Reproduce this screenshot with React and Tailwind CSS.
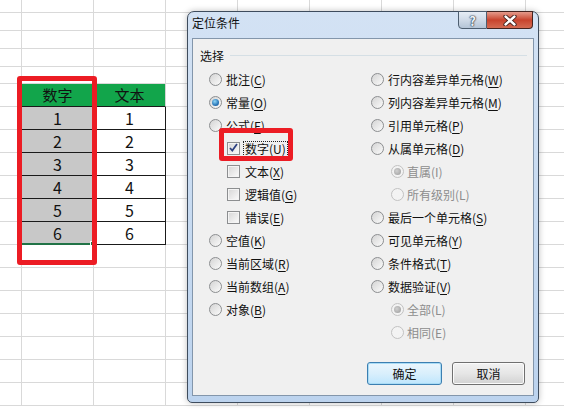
import React from "react";

const ROWS = [
  "h-[13px]", "h-[18px]", "h-[18px]", "h-[18px]", "h-[17px]",
  "h-[23px]", "h-[23px]", "h-[23px]", "h-[23px]", "h-[23px]", "h-[23px]", "h-[23px]",
  "h-[23px]", "h-[23px]", "h-[23px]", "h-[23px]", "h-[23px]", "h-[23px]", "h-[23px]",
];
const COLS = ["w-[22px]", "w-[72px]", "w-[72px]", "w-[72px]", "w-[72px]", "w-[72px]", "w-[72px]", "w-[72px]", "w-[72px]"];

function Cell({ r, c }) {
  const base = "shrink-0 border-r border-b flex items-center justify-center";
  if (r === 5 && c === 1)
    return <div className={`${COLS[c]} ${base} bg-[#12a54b] border-r-[#12a54b] border-b-[#1a1a1a] text-[15px] text-[#111]`}>数字</div>;
  if (r === 5 && c === 2)
    return <div className={`${COLS[c]} ${base} bg-[#12a54b] border-r-[#d4d4d4] border-b-[#1a1a1a] text-[15px] text-[#111]`}>文本</div>;
  if (r >= 6 && r <= 11 && c === 1)
    return <div className={`${COLS[c]} ${base} bg-[#c8c8c8] border-[#1a1a1a] text-[16px] text-[#111]`}>{r - 5}</div>;
  if (r >= 6 && r <= 11 && c === 2)
    return <div className={`${COLS[c]} ${base} bg-white border-[#1a1a1a] text-[16px] text-[#111]`}>{r - 5}</div>;
  return <div className={`${COLS[c]} ${base} border-[#d9d9d9]`} />;
}

function Radio({ checked, disabled }) {
  return (
    <span
      className={`flex h-[13px] w-[13px] shrink-0 items-center justify-center rounded-full border ${
        disabled ? "border-[#c2c2c2] bg-[#f3f3f3]" : "border-[#8c8e90] bg-gradient-to-br from-[#d4d4d4] to-[#fbfbfb]"
      }`}
    >
      {checked && (
        <span
          className={`h-[7px] w-[7px] rounded-full ${
            disabled
              ? "bg-[radial-gradient(circle_at_40%_40%,#d0d0d0,#9a9a9a)]"
              : "bg-[radial-gradient(circle_at_40%_35%,#8fd6f7,#2a77b8_60%,#1a4f86)]"
          }`}
        />
      )}
    </span>
  );
}

function Check({ checked }) {
  return (
    <span className="flex h-[13px] w-[13px] shrink-0 items-center justify-center border border-[#8c8e90] bg-[#f4f4f4]">
      <span className="relative h-[9px] w-[9px] bg-gradient-to-br from-[#d9d9d9] to-[#f8f8f8]">
        {checked && (
          <svg className="absolute left-[-1px] top-[-2px]" width="11" height="11" viewBox="0 0 11 11">
            <path d="M2 6 L4.3 8.6 L9 2" fill="none" stroke="#2c4080" strokeWidth="1.7" />
          </svg>
        )}
      </span>
    </span>
  );
}

function Label({ text, k, disabled }) {
  return (
    <span className={disabled ? "text-[#8d8d8d]" : "text-[#111]"}>
      {text}(
      {disabled ? k : <span className="underline underline-offset-[2px]">{k}</span>})
    </span>
  );
}

function RadioRow({ text, k, checked, disabled, indent }) {
  return (
    <div className={`flex h-[23px] items-center ${indent ? "gap-[3px] pl-[20px]" : "gap-[4px]"}`}>
      <Radio checked={checked} disabled={disabled} />
      <Label text={text} k={k} disabled={disabled} />
    </div>
  );
}

function CheckRow({ text, k, checked, focus, redbox }) {
  return (
    <div className="relative flex h-[23px] items-center gap-[3px] pl-[18px]">
      <Check checked={checked} />
      <span className={focus ? "border border-dotted border-[#222] px-[1px] leading-[14px]" : "px-[2px]"}>
        <Label text={text} k={k} />
      </span>
      {redbox && (
        <div className="absolute left-[10px] top-[-9px] h-[33px] w-[74px] rounded-[3px] border-[5px] border-[#ec1c24]" />
      )}
    </div>
  );
}

export default function App() {
  return (
    <div className="relative h-[418px] w-[564px] overflow-hidden bg-white font-['Noto_Sans_CJK_SC','Microsoft_YaHei',sans-serif]">
      {/* sheet grid */}
      <div className="flex flex-col">
        {ROWS.map((rh, r) => (
          <div key={r} className={`flex ${rh}`}>
            {COLS.map((_, c) => (
              <Cell key={c} r={r} c={c} />
            ))}
          </div>
        ))}
      </div>

      {/* selection bottom border + fill handle */}
      <div className="absolute left-[22px] top-[243px] h-[2px] w-[70px] bg-[#217346]" />
      <div className="absolute left-[90px] top-[241px] h-[5px] w-[5px] border border-white bg-[#217346]" />

      {/* red highlight on sheet */}
      <div className="absolute left-[17px] top-[76px] h-[189px] w-[80px] rounded-[3px] border-[5px] border-[#ec1c24]" />

      {/* dialog */}
      <div className="absolute left-[187px] top-[11px] flex h-[392px] w-[352px] flex-col rounded-b-[5px] rounded-t-[7px] border border-[#3e4c5d] bg-gradient-to-b from-[#d3e2f4] via-[#c8dbf1] to-[#bcd3ee] shadow-[0_0_6px_rgba(0,0,0,0.25)]">
        <div className="flex h-[26px] shrink-0 items-start justify-between pl-[4px] pr-[5px]">
          <span className="pt-[3px] text-[12px] leading-[16px] text-[#111]">定位条件</span>
          <div className="-mt-px flex">
            <div className="flex h-[18px] w-[29px] items-center justify-center rounded-bl-[4px] border border-[#4d5e70] bg-gradient-to-b from-[#e6edf5] via-[#cfdae7] to-[#b4c4d6] text-[13px] font-bold leading-none text-[#eef2f7] [text-shadow:0_0_1px_#2b3a4a,0_0_1px_#2b3a4a,0_0_2px_#2b3a4a]">
              ?
            </div>
            <div className="flex h-[18px] w-[46px] items-center justify-center rounded-br-[4px] border border-l-0 border-[#45231f] bg-gradient-to-b from-[#e49a8b] via-[#c8432d] to-[#d46a52]">
              <svg width="14" height="11" viewBox="0 0 14 11">
                <path d="M2.5 1.5 L11.5 9.5 M11.5 1.5 L2.5 9.5" stroke="#3b1c18" strokeWidth="4.2" strokeLinecap="round" />
                <path d="M2.5 1.5 L11.5 9.5 M11.5 1.5 L2.5 9.5" stroke="#ffffff" strokeWidth="2.4" strokeLinecap="round" />
              </svg>
            </div>
          </div>
        </div>

        <div className="mx-[4px] mb-[6px] flex flex-1 flex-col border border-[#8396ab] bg-[#f0f0f0] text-[12px] leading-[16px]">
          <div className="flex h-[29px] items-center pl-[7px] pr-[6px] pt-[4px]">
            <span className="text-[#111]">选择</span>
            <div className="ml-[6px] h-0 flex-1 border-t border-[#d5dfe5]" />
          </div>

          <div className="grid grid-cols-[178px_1fr]">
            <div className="flex flex-col pl-[16px]">
              <RadioRow text="批注" k="C" />
              <RadioRow text="常量" k="O" checked />
              <RadioRow text="公式" k="F" />
              <CheckRow text="数字" k="U" checked focus redbox />
              <CheckRow text="文本" k="X" />
              <CheckRow text="逻辑值" k="G" />
              <CheckRow text="错误" k="E" />
              <RadioRow text="空值" k="K" />
              <RadioRow text="当前区域" k="R" />
              <RadioRow text="当前数组" k="A" />
              <RadioRow text="对象" k="B" />
            </div>
            <div className="flex flex-col">
              <RadioRow text="行内容差异单元格" k="W" />
              <RadioRow text="列内容差异单元格" k="M" />
              <RadioRow text="引用单元格" k="P" />
              <RadioRow text="从属单元格" k="D" />
              <RadioRow text="直属" k="I" checked disabled indent />
              <RadioRow text="所有级别" k="L" disabled indent />
              <RadioRow text="最后一个单元格" k="S" />
              <RadioRow text="可见单元格" k="Y" />
              <RadioRow text="条件格式" k="T" />
              <RadioRow text="数据验证" k="V" />
              <RadioRow text="全部" k="L" checked disabled indent />
              <RadioRow text="相同" k="E" disabled indent />
            </div>
          </div>

          <div className="mt-[18px] flex justify-end gap-[10px] pr-[8px]">
            <button className="flex h-[23px] w-[75px] items-center justify-center rounded-[3px] border border-[#3c7fb1] bg-gradient-to-b from-[#eaf6fd] via-[#d9effc] to-[#bee6fd] text-[12px] text-[#111] shadow-[inset_0_0_0_1px_#a9dcf6]">
              确定
            </button>
            <button className="flex h-[23px] w-[73px] items-center justify-center rounded-[3px] border border-[#707070] bg-gradient-to-b from-[#f2f2f2] via-[#e6e6e6] to-[#d2d2d2] text-[12px] text-[#111] shadow-[inset_0_0_0_1px_#fbfbfb]">
              取消
            </button>
          </div>
        </div>
      </div>
    </div>
  );
}
